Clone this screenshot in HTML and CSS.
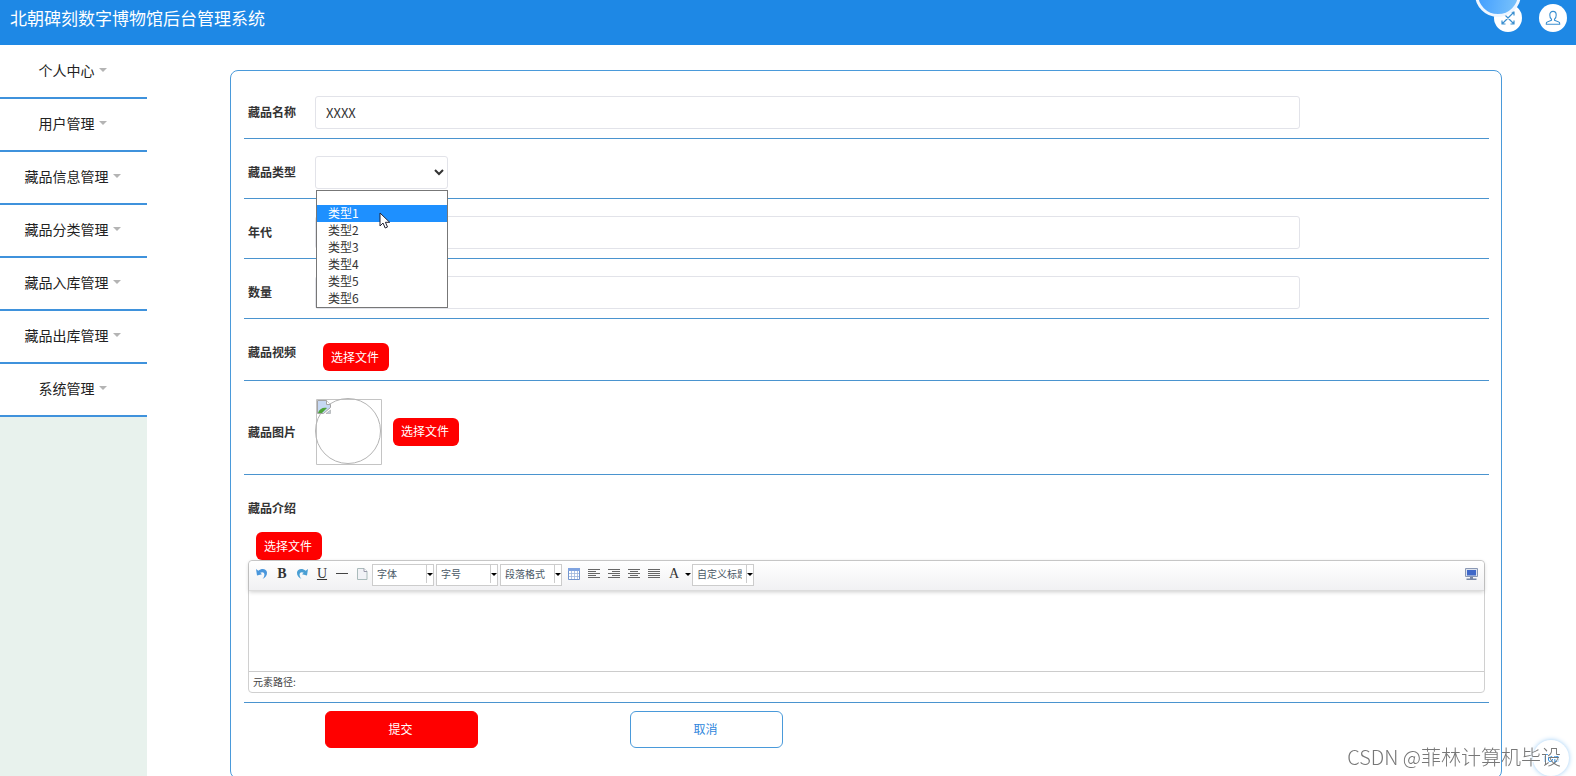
FILE: index.html
```
<!DOCTYPE html>
<html lang="zh-CN">
<head>
    <meta charset="UTF-8">
    <meta name="viewport" content="width=device-width, initial-scale=1.0">
    <title>北朝碑刻数字博物馆后台管理系统</title>
    <link rel="stylesheet" href="styles.css">
</head>
<body>
    <header class="header">
        <h1>北朝碑刻数字博物馆后台管理系统</h1>
        <div class="header-tools">
            <button type="button" class="round-btn" aria-label="全屏">
                <svg width="16" height="16" viewBox="0 0 16 16" fill="none" stroke="#3a8fd0" stroke-width="1.2">
                    <path d="M2.5 2.5l11 11M13.5 2.5l-11 11M2 5.500V2h3.500M10.500 2H14v3.500M14 10.500V14h-3.500M5.500 14H2v-3.500"/>
                </svg>
            </button>
            <button type="button" class="round-btn" aria-label="用户">
                <svg width="16" height="16" viewBox="0 0 16 16" fill="none" stroke="#3a8fd0" stroke-width="1.1">
                    <path d="M6.500 9.300C5.200 8.400 4.800 6.900 4.800 5c0-2.200 1.200-3.600 3.200-3.600s3.200 1.400 3.200 3.600c0 1.900-.4 3.400-1.700 4.300v1c1 .7 4.300.9 5 2.300.2.500.2 1.100.2 1.700H1.300c0-.6 0-1.200.2-1.700.7-1.400 4-1.600 5-2.300z"/>
                </svg>
            </button>
        </div>
    </header>

    <div class="layout">
        <nav class="sidebar">
            <a href="#">个人中心<span class="caret"></span></a>
            <a href="#">用户管理<span class="caret"></span></a>
            <a href="#">藏品信息管理<span class="caret"></span></a>
            <a href="#">藏品分类管理<span class="caret"></span></a>
            <a href="#">藏品入库管理<span class="caret"></span></a>
            <a href="#">藏品出库管理<span class="caret"></span></a>
            <a href="#">系统管理<span class="caret"></span></a>
        </nav>

        <main class="main">
            <form class="form-box">
                <div class="row">
                    <label for="name">藏品名称</label>
                    <input type="text" id="name" class="field" value="XXXX">
                </div>
                <div class="row">
                    <label for="type">藏品类型</label>
                    <div class="type-wrap">
                        <select id="type" class="field">
                            <option></option>
                            <option>类型1</option>
                            <option>类型2</option>
                            <option>类型3</option>
                            <option>类型4</option>
                            <option>类型5</option>
                            <option>类型6</option>
                        </select>
                        <!-- 展开的下拉列表 -->
                        <ul class="type-list">
                            <li class="empty"></li>
                            <li class="active">类型1</li>
                            <li>类型2</li>
                            <li>类型3</li>
                            <li>类型4</li>
                            <li>类型5</li>
                            <li>类型6</li>
                        </ul>
                        <svg class="cursor" width="12" height="18" viewBox="0 0 12 18">
                            <path d="M1 1v13l3-3 2.200 5 2.300-1L6.400 10.300h4.300z" fill="#fff" stroke="#223" stroke-width="1"/>
                        </svg>
                    </div>
                </div>
                <div class="row">
                    <label for="year">年代</label>
                    <input type="text" id="year" class="field">
                </div>
                <div class="row">
                    <label for="count">数量</label>
                    <input type="text" id="count" class="field">
                </div>
                <div class="row">
                    <label for="video">藏品视频</label>
                    <button type="button" id="video" class="file-btn low">选择文件</button>
                </div>
                <div class="row middle">
                    <label for="photo">藏品图片</label>
                    <svg class="photo" width="67" height="67" viewBox="0 0 67 67" fill="none">
                        <path d="M1.500 1.500h65v65h-65z" stroke="#c4c4c4"/>
                        <circle cx="33" cy="33" r="32.500" stroke="#b4b4b4"/>
                        <path d="M2.500 2.500h9l4 4v3l-7 6h-6z" fill="#c6d8f3" stroke="#a4a4a4"/>
                        <path d="M3 15c1-4 5-6 9-5l-5 5z" fill="#4ea53a"/>
                        <path d="M11.500 2.500v4h4" fill="#fff" stroke="#a4a4a4"/>
                        <path d="M11 15.500h4.500V12z" fill="#bcd" stroke="#a4a4a4" stroke-width=".6"/>
                    </svg>
                    <button type="button" id="photo" class="file-btn">选择文件</button>
                </div>
                <div class="row block">
                    <label for="intro">藏品介绍</label>
                    <button type="button" class="file-btn low">选择文件</button>
                    <div class="editor">
                        <div class="toolbar">
                            <button type="button" aria-label="撤销"><svg width="14" height="14" viewBox="0 0 14 14"><path d="M1 2l1 6.500 5-1.300-1.800-1.400c2-1.300 4-.6 4.200 1.400.1 1.700-.6 3.300-1.900 4.800 3-1.500 4.700-3.800 4.500-6.500C11.700 2 7 .8 3.300 3.700z" fill="#4a97dc"/></svg></button>
                            <button type="button" class="serif" aria-label="加粗"><b>B</b></button>
                            <button type="button" aria-label="重做"><svg width="14" height="14" viewBox="0 0 14 14"><path d="M13 2l-1 6.500-5-1.300 1.800-1.400c-2-1.300-4-.6-4.200 1.400-.1 1.700.6 3.300 1.900 4.800-3-1.500-4.700-3.800-4.500-6.500C2.300 2 7 .8 10.700 3.700z" fill="#4a9fd4"/></svg></button>
                            <button type="button" class="serif" aria-label="下划线"><u>U</u></button>
                            <button type="button" aria-label="分隔线"><svg width="12" height="12"><path d="M0 5.500h12" stroke="#444"/></svg></button>
                            <button type="button" aria-label="清空"><svg width="12" height="14" viewBox="0 0 12 14"><path d="M1.500 1.500h6.500l3 3v8h-9.500z" fill="#f1f2f6" stroke="#abb"/><path d="M8 1.500v3h3" fill="#fff" stroke="#99a"/></svg></button>
                            <span class="combo"><select aria-label="字体"><option>字体</option></select></span>
                            <span class="combo"><select aria-label="字号"><option>字号</option></select></span>
                            <span class="combo"><select aria-label="段落格式"><option>段落格式</option></select></span>
                            <button type="button" aria-label="表格"><svg width="12" height="12" viewBox="0 0 12 12"><path d="M.5.5h11v11H.5z" fill="#fff" stroke="#7295cf"/><path d="M0 0h12v3H0z" fill="#7fa3e0"/><path d="M3.500 3v8M6.500 3v8M9.500 3v8M1 5.500h10M1 8.500h10" stroke="#9db5dc" stroke-width=".8"/></svg></button>
                            <button type="button" aria-label="左对齐"><svg width="12" height="12"><path d="M0 1.500h12M0 3.500h8M0 5.500h12M0 7.500h8M0 9.500h12" stroke="#666"/></svg></button>
                            <button type="button" aria-label="右对齐"><svg width="12" height="12"><path d="M0 1.500h12M4 3.500h8M0 5.500h12M4 7.500h8M0 9.500h12" stroke="#666"/></svg></button>
                            <button type="button" aria-label="居中"><svg width="12" height="12"><path d="M0 1.500h12M2 3.500h8M0 5.500h12M2 7.500h8M0 9.500h12" stroke="#666"/></svg></button>
                            <button type="button" aria-label="两端对齐"><svg width="12" height="12"><path d="M0 1.500h12M0 3.500h12M0 5.500h12M0 7.500h12M0 9.500h12" stroke="#666"/></svg></button>
                            <button type="button" class="serif" aria-label="字体颜色">A</button>
                            <button type="button" class="mini" aria-label="选择颜色"></button>
                            <span class="combo"><select aria-label="自定义标题"><option>自定义标题</option></select></span>
                            <button type="button" class="screen" aria-label="全屏编辑"><svg width="13" height="12" viewBox="0 0 13 12"><path d="M.5.5h12v8H.5z" fill="#dde3ee" stroke="#8a98b5"/><path d="M2 2h9v5.500H2z" fill="#3f68c8"/><path d="M5 9h3v1.500H5zM1.500 10.500h10V12h-10z" fill="#7887a6"/></svg></button>
                        </div>
                        <textarea id="intro"></textarea>
                        <div class="path">元素路径:</div>
                    </div>
                </div>
                <div class="actions">
                    <button type="submit" class="submit">提交</button>
                    <button type="button" class="cancel">取消</button>
                </div>
            </form>
        </main>
    </div>

    <div class="bubble"></div>
    <a href="#" class="to-top">Top</a>
    <div class="watermark">CSDN @菲林计算机毕设</div>
</body>
</html>
```
FILE: styles.css
```
* {
    box-sizing: border-box;
}

body {
    margin: 0;
    height: 100vh;
    display: flex;
    flex-direction: column;
    overflow: hidden;
    background: #fff;
    color: #333;
    font-family: "Noto Sans CJK SC", sans-serif;
    font-size: 12px;
}

button, input, select, textarea {
    font-family: inherit;
    font-size: 12px;
    margin: 0;
}

button {
    cursor: pointer;
}

/* 顶部栏 */
.header {
    flex: none;
    display: flex;
    justify-content: space-between;
    height: 45px;
    padding: 0 9px 0 10px;
    background-color: #1e88e5;
}

.header h1 {
    margin: 0;
    color: #fff;
    font-size: 17px;
    font-weight: 400;
    line-height: 36px;
}

.header-tools {
    display: flex;
    gap: 17px;
    padding-top: 4px;
}

.round-btn {
    display: flex;
    align-items: center;
    justify-content: center;
    width: 28px;
    height: 28px;
    padding: 0;
    border: none;
    border-radius: 50%;
    background: #fff;
}

.layout {
    flex: 1;
    min-height: 0;
    display: flex;
}

/* 左侧菜单 */
.sidebar {
    flex: none;
    width: 147px;
    padding-top: 1px;
    background: linear-gradient(#fff 1px, #e8f2ed 1px);
}

.sidebar a {
    display: flex;
    align-items: center;
    justify-content: center;
    gap: 4px;
    height: 53px;
    padding: 0 2px 4px 0;
    background: #fff;
    border-bottom: 2px solid #3f92dc;
    color: #222;
    font-size: 14px;
    text-decoration: none;
}

.caret {
    border: 4px solid transparent;
    border-top: 4px solid #b4b4b4;
    border-bottom: none;
}

/* 表单 */
.main {
    flex: 1;
    min-width: 0;
    padding: 25px 74px 0 83px;
}

.form-box {
    padding: 8px 12px 30px 13px;
    border: 1px solid #4a9ada;
    border-radius: 8px;
}

.row {
    display: flex;
    align-items: flex-start;
    padding: 17px 4px 9px;
    border-bottom: 1px solid #4a94cf;
}

.row.middle {
    align-items: center;
}

.row.block {
    display: block;
}

.row label {
    flex: none;
    display: block;
    width: 67px;
    font-weight: 700;
    line-height: 32px;
}

.field {
    flex: 1;
    height: 33px;
    margin-right: 185px;
    padding: 0 10px;
    border: 1px solid #e2e3e9;
    border-radius: 3px;
    background: #fff;
    color: #333;
    font-size: 13px;
}

.row .file-btn.low {
    margin-top: 7px;
}

.type-wrap {
    position: relative;
    width: 133px;
}

.type-wrap .field {
    display: block;
    width: 100%;
    padding: 0;
}

.type-list {
    position: absolute;
    z-index: 2;
    top: 34px;
    left: 1px;
    right: 0;
    margin: 0;
    padding: 0;
    border: 1px solid #777;
    background: #fff;
    list-style: none;
}

.type-list li {
    height: 17px;
    padding-left: 11px;
    line-height: 16px;
}

.type-list .empty {
    height: 14px;
}

.type-list .active {
    background: #1e90ff;
    color: #fff;
}

.cursor {
    position: absolute;
    z-index: 3;
    top: 56px;
    left: 64px;
}

.file-btn {
    display: block;
    width: 66px;
    height: 28px;
    margin-left: 8px;
    padding: 0 2px 2px 0;
    border: none;
    border-radius: 6px;
    background: #f00;
    color: #fff;
}

.photo {
    flex: none;
    margin-right: 3px;
}

/* 编辑器 */
.editor {
    border: 1px solid #d0d0d0;
    border-radius: 4px;
}

.toolbar {
    display: flex;
    padding: 3px;
    height: 30px;
    border-radius: 4px 4px 0 0;
    border-bottom: 1px solid #dcdcdc;
    background: linear-gradient(#fff, #f1f1f3);
    box-shadow: 0 1px 4px rgba(0, 0, 0, 0.2);
}

.toolbar button {
    flex: none;
    display: flex;
    align-items: center;
    justify-content: center;
    width: 20px;
    height: 20px;
    padding: 0;
    border: none;
    background: none;
    color: #333;
}

.toolbar .serif {
    font-family: "Liberation Serif", serif;
    font-size: 14px;
}

.toolbar .mini {
    width: 8px;
}

.mini::after,
.combo::after {
    content: "";
    border: 3px solid transparent;
    border-top: 3px solid #000;
    border-bottom: none;
}

.combo {
    flex: none;
    display: flex;
    align-items: center;
    width: 62px;
    height: 22px;
    margin-right: 2px;
    padding-bottom: 2px;
    border: 1px solid #ccc;
    background: #fff;
}

.combo select {
    appearance: none;
    width: 54px;
    height: 18px;
    padding: 0 4px 2px;
    border: none;
    border-right: 1px solid #ccc;
    background: none;
    color: #4a5866;
    font-size: 10px;
}

.toolbar .screen {
    margin-left: auto;
}

.editor textarea {
    display: block;
    width: 100%;
    height: 80px;
    border: none;
    outline: none;
    resize: none;
    background: transparent;
}

.path {
    height: 21px;
    padding-left: 4px;
    border-top: 1px solid #ccc;
    color: #444;
    font-size: 10px;
    line-height: 19px;
}

.row.block label {
    margin-bottom: 8px;
}

.actions {
    display: flex;
    gap: 152px;
    padding: 8px 0 0 81px;
}

.actions button {
    width: 153px;
    height: 37px;
    padding: 0 2px 2px 0;
    border: 1px solid #f00;
    border-radius: 6px;
    background: #f00;
    color: #fff;
}

.actions .cancel {
    border-color: #4a9ada;
    background: #fff;
    color: #2f86dc;
}

/* 浮动元素 */
.bubble {
    position: fixed;
    top: -29px;
    right: 55px;
    width: 46px;
    height: 46px;
    border: 3px solid #eef6ff;
    border-radius: 50%;
    background: linear-gradient(100deg, #3d9bff, #7cc4fb);
}

.to-top {
    position: fixed;
    right: 7px;
    bottom: 0;
    width: 36px;
    height: 36px;
    border-radius: 50%;
    background: #fff;
    box-shadow: 0 0 5px #9cccf5;
    color: #1e88e5;
    font-size: 10px;
    line-height: 36px;
    text-align: center;
    text-decoration: none;
}

.watermark {
    position: fixed;
    right: 15px;
    bottom: 4px;
    color: #777;
    font-size: 20px;
    font-weight: 300;
    line-height: 30px;
    text-shadow: 1px 1px 0 #fff;
}
```
